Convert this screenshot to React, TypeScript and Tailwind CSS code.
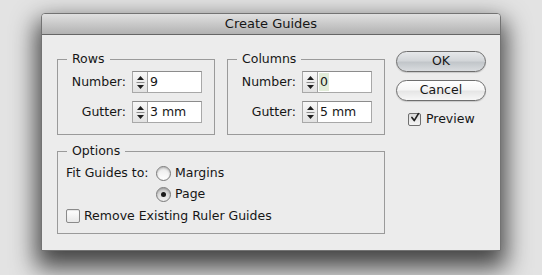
import React from 'react';

const Spinner = () => (
  <div className="w-[15px] h-full flex items-center justify-center border-r border-[#a3a3a3] bg-[linear-gradient(to_bottom,#f7f7f7,#e2e2e2)]">
    <svg width="9" height="18" viewBox="0 0 9 18">
      <path d="M4.5 3 L8 7 H1 Z" fill="#1e1e1e" />
      <line x1="0.5" y1="9.5" x2="8.5" y2="9.5" stroke="#8c8c8c" strokeWidth="1" />
      <path d="M4.5 16 L8 12 H1 Z" fill="#1e1e1e" />
    </svg>
  </div>
);

interface FieldProps {
  label: string;
  value: string;
  selected?: boolean;
}

const Field = ({ label, value, selected }: FieldProps) => (
  <div className="flex items-center">
    <span className="w-[74px] pr-[6px] text-right">{label}</span>
    <div className="w-[70px] h-[22px] flex border border-[#a8a8a8] border-t-[#8c8c8c] bg-white">
      <Spinner />
      <div className="flex-1 flex items-center pl-[1px]">
        <span className={selected ? 'bg-[#e2ecd9] px-[1px]' : 'px-[1px]'}>{value}</span>
      </div>
    </div>
  </div>
);

interface GroupProps {
  title: string;
  number: string;
  gutter: string;
  selected?: boolean;
}

const Group = ({ title, number, gutter, selected }: GroupProps) => (
  <fieldset className="w-[158px] border border-[#9a9a9a] pt-[4px] pb-[11px] flex flex-col gap-[8px]">
    <legend className="ml-[9px] px-[5px] leading-[16px]">{title}</legend>
    <Field label="Number:" value={number} selected={selected} />
    <Field label="Gutter:" value={gutter} />
  </fieldset>
);

const Radio = ({ checked }: { checked?: boolean }) => (
  <span
    className={
      'w-[15px] h-[15px] rounded-full border border-[#7a7a7a] flex items-center justify-center shadow-[inset_0_1px_2px_rgba(0,0,0,0.25)] ' +
      (checked
        ? 'bg-[linear-gradient(to_bottom,#c9c9c9,#f2f2f2)]'
        : 'bg-[linear-gradient(to_bottom,#e9e9e9,#ffffff)]')
    }
  >
    {checked && <span className="w-[5px] h-[5px] rounded-full bg-[#1a1a1a]" />}
  </span>
);

const Button = ({ label, isDefault }: { label: string; isDefault?: boolean }) => (
  <button
    className={
      'w-[90px] h-[21px] rounded-full border border-[#6e6e6e] flex items-center justify-center leading-none shadow-[0_1px_1px_rgba(0,0,0,0.15)] ' +
      (isDefault
        ? 'bg-[linear-gradient(to_bottom,#e6e8ea_0%,#d3d6d9_45%,#c2c6ca_55%,#d9dcdf_100%)]'
        : 'bg-[linear-gradient(to_bottom,#ffffff_0%,#f6f6f6_45%,#e6e6e6_55%,#f7f7f7_100%)]')
    }
  >
    {label}
  </button>
);

export default function App() {
  return (
    <div className="w-[542px] h-[275px] bg-[#e3e3e3] pl-[41px] pt-[13px] overflow-hidden font-['Lucida_Grande','DejaVu_Sans',sans-serif] text-[12.5px] text-[#161616]">
      <div className="w-[460px] h-[238px] flex flex-col border border-[#737373] rounded-t-[4px] bg-[#ececec] shadow-[0_12px_24px_5px_rgba(0,0,0,0.7)]">
        <div className="h-[21px] shrink-0 flex items-center justify-center rounded-t-[3px] border-b border-[#666666] bg-[linear-gradient(to_bottom,#e0e0e0,#b2b2b2)] text-[13px]">
          Create Guides
        </div>
        <div className="flex pl-[15px] pt-[16px]">
          <div className="w-[328px] flex flex-col gap-[8px]">
            <div className="flex gap-[12px]">
              <Group title="Rows" number="9" gutter="3 mm" />
              <Group title="Columns" number="0" gutter="5 mm" selected />
            </div>
            <fieldset className="w-[328px] border border-[#9a9a9a] pl-[8px] pt-[6px] pb-[9px] flex flex-col">
              <legend className="ml-[1px] px-[5px] leading-[16px]">Options</legend>
              <div className="flex">
                <span className="w-[90px] h-[16px] leading-[16px]">Fit Guides to:</span>
                <div className="flex flex-col gap-[5px]">
                  <label className="flex items-center gap-[4px] h-[16px]">
                    <Radio />
                    <span>Margins</span>
                  </label>
                  <label className="flex items-center gap-[4px] h-[16px]">
                    <Radio checked />
                    <span>Page</span>
                  </label>
                </div>
              </div>
              <label className="flex items-center gap-[4px] h-[16px] mt-[6px]">
                <span className="w-[14px] h-[14px] rounded-[2px] border border-[#8a8a8a] bg-[linear-gradient(to_bottom,#ffffff,#e8e8e8)] shadow-[inset_0_1px_1px_rgba(0,0,0,0.1)]" />
                <span>Remove Existing Ruler Guides</span>
              </label>
            </fieldset>
          </div>
          <div className="ml-[11px] flex flex-col">
            <Button label="OK" isDefault />
            <div className="h-[8px]" />
            <Button label="Cancel" />
            <label className="flex items-center gap-[5px] ml-[12px] mt-[11px] h-[14px]">
              <span className="w-[13px] h-[13px] rounded-[2px] border border-[#6f6f6f] bg-[linear-gradient(to_bottom,#dcdcdc,#f4f4f4)] flex items-center justify-center">
                <svg width="13" height="13" viewBox="0 0 13 13" className="-mt-[3px] ml-[1px]">
                  <path d="M2.5 6.5 L5.5 10.5 L11 1.5" fill="none" stroke="#202020" strokeWidth="2.2" strokeLinecap="round" strokeLinejoin="round" />
                </svg>
              </span>
              <span>Preview</span>
            </label>
          </div>
        </div>
      </div>
    </div>
  );
}
